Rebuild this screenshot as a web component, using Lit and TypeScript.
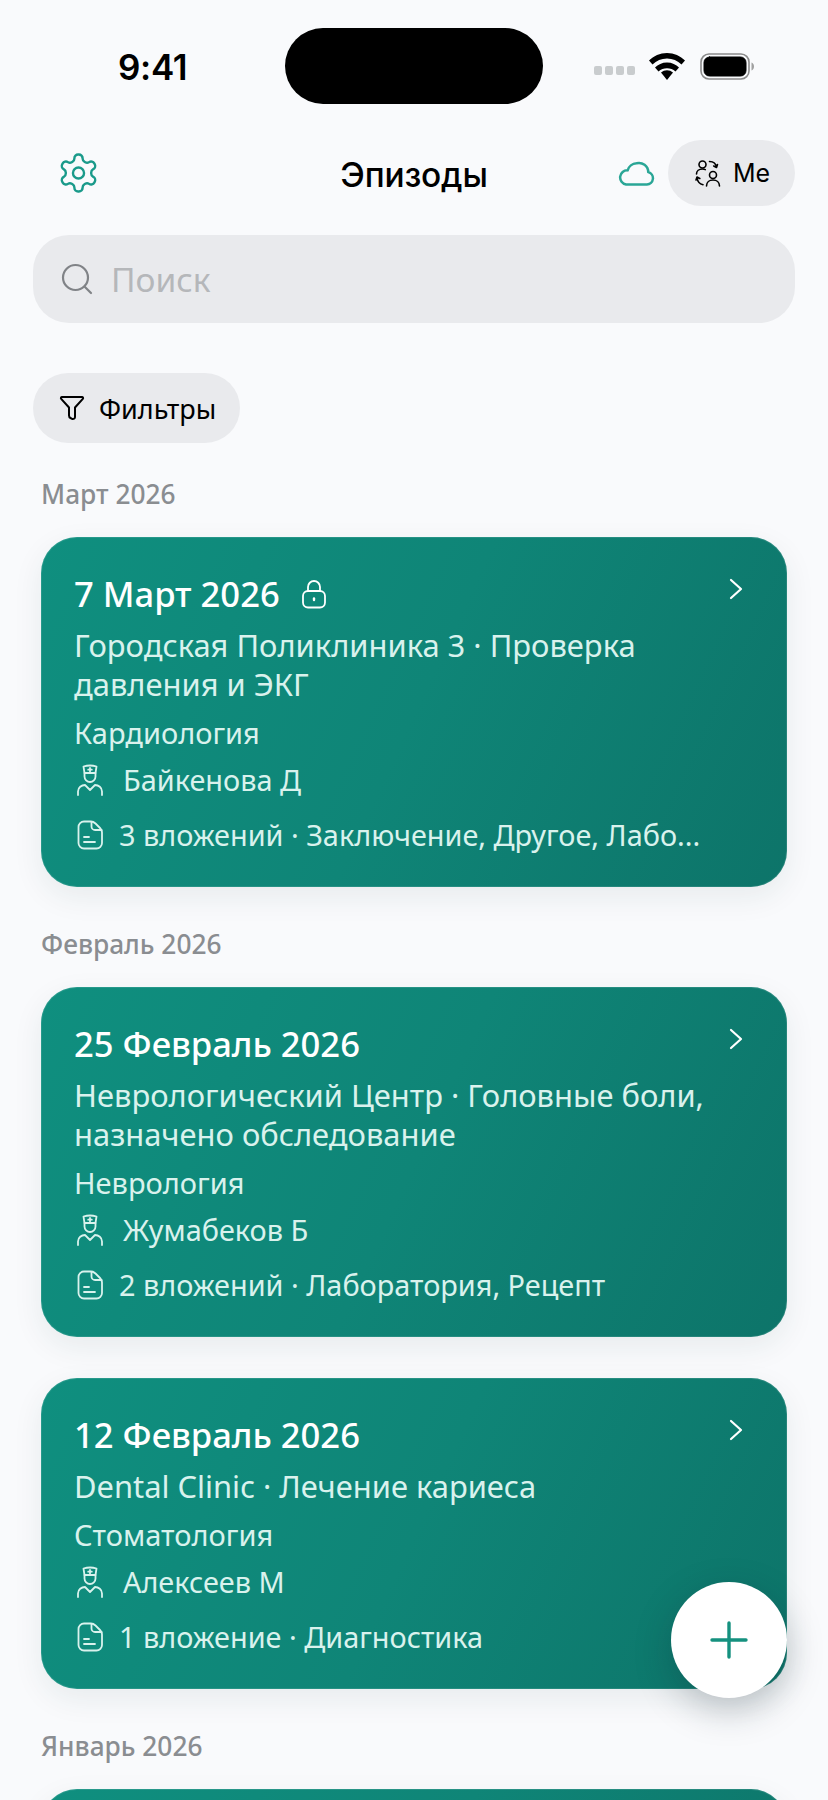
import { LitElement, html, css, svg } from 'lit';
import { customElement } from 'lit/decorators.js';

interface Episode {
  date: string;
  locked?: boolean;
  summary: string;
  specialty: string;
  doctor: string;
  files: string;
}

interface Group {
  month: string;
  episodes: Episode[];
}

const GROUPS: Group[] = [
  {
    month: 'Март 2026',
    episodes: [
      {
        date: '7 Март 2026',
        locked: true,
        summary: 'Городская Поликлиника 3 · Проверка давления и ЭКГ',
        specialty: 'Кардиология',
        doctor: 'Байкенова Д',
        files: '3 вложений · Заключение, Другое, Лабо...',
      },
    ],
  },
  {
    month: 'Февраль 2026',
    episodes: [
      {
        date: '25 Февраль 2026',
        summary: 'Неврологический Центр · Головные боли, назначено обследование',
        specialty: 'Неврология',
        doctor: 'Жумабеков Б',
        files: '2 вложений · Лаборатория, Рецепт',
      },
      {
        date: '12 Февраль 2026',
        summary: 'Dental Clinic · Лечение кариеса',
        specialty: 'Стоматология',
        doctor: 'Алексеев М',
        files: '1 вложение · Диагностика',
      },
    ],
  },
  {
    month: 'Январь 2026',
    episodes: [{ date: '', summary: '', specialty: '', doctor: '', files: '' }],
  },
];

const gearIcon = svg`<path d="M12.22 2h-.44a2 2 0 0 0-2 2v.18a2 2 0 0 1-1 1.73l-.43.25a2 2 0 0 1-2 0l-.15-.08a2 2 0 0 0-2.73.73l-.22.38a2 2 0 0 0 .73 2.73l.15.1a2 2 0 0 1 1 1.72v.51a2 2 0 0 1-1 1.74l-.15.09a2 2 0 0 0-.73 2.73l.22.38a2 2 0 0 0 2.73.73l.15-.08a2 2 0 0 1 2 0l.43.25a2 2 0 0 1 1 1.73V20a2 2 0 0 0 2 2h.44a2 2 0 0 0 2-2v-.18a2 2 0 0 1 1-1.73l.43-.25a2 2 0 0 1 2 0l.15.08a2 2 0 0 0 2.73-.73l.22-.39a2 2 0 0 0-.73-2.73l-.15-.08a2 2 0 0 1-1-1.74v-.5a2 2 0 0 1 1-1.74l.15-.09a2 2 0 0 0 .73-2.73l-.22-.38a2 2 0 0 0-2.73-.73l-.15.08a2 2 0 0 1-2 0l-.43-.25a2 2 0 0 1-1-1.73V4a2 2 0 0 0-2-2z"/><circle cx="12" cy="12" r="3"/>`;

@customElement('app-root')
export class AppRoot extends LitElement {
  static override styles = css`
    :host {
      display: block;
      position: relative;
      width: 828px;
      height: 1800px;
      overflow: hidden;
      background: #f9fafc;
      font-family: 'Noto Sans', sans-serif;
      color: #000;
    }

    svg {
      display: block;
      flex: none;
      fill: none;
      stroke: currentColor;
      stroke-linecap: round;
      stroke-linejoin: round;
    }

    /* status bar */
    .status {
      display: flex;
      align-items: center;
      height: 76px;
      padding: 28px 73px 0 118px;
    }
    .time {
      font-family: Inter, sans-serif;
      font-size: 35px;
      font-weight: 600;
      letter-spacing: -0.3px;
      width: 167px;
      padding-top: 1px;
    }
    .island {
      width: 258px;
      height: 76px;
      border-radius: 38px;
      background: #000;
    }
    .sys {
      display: flex;
      align-items: center;
      margin-left: 51px;
    }
    .dots {
      display: flex;
      gap: 3px;
      margin: 8px 14px 0 0;
    }
    .dots i {
      width: 8px;
      height: 9px;
      border-radius: 2px;
      background: #c9ccce;
    }
    .wifi {
      fill: #000;
      stroke: none;
      margin-right: 15px;
    }

    /* top bar */
    .topbar {
      display: grid;
      grid-template-columns: 1fr auto 1fr;
      align-items: center;
      height: 66px;
      margin-top: 36px;
      padding: 0 33px;
    }
    .gear {
      color: #1a9a8a;
      margin-left: 27px;
    }
    .title {
      font-family: Inter, sans-serif;
      font-size: 33.5px;
      font-weight: 500;
      letter-spacing: -0.2px;
      padding-top: 4px;
    }
    .actions {
      display: flex;
      align-items: center;
      justify-content: flex-end;
    }
    .cloud {
      color: #2aa696;
      margin-right: 12px;
    }
    .me {
      display: flex;
      align-items: center;
      gap: 12px;
      width: 127px;
      height: 66px;
      box-sizing: border-box;
      padding-left: 27px;
      border-radius: 33px;
      background: #e9eaed;
      font-family: Inter, sans-serif;
      font-size: 25px;
    }

    /* search and filters */
    .search {
      display: flex;
      align-items: center;
      gap: 18px;
      height: 88px;
      margin: 29px 33px 0;
      padding-left: 28px;
      border-radius: 36px;
      background: #e9eaed;
      font-size: 33.5px;
      color: #b5b7ba;
    }
    .search svg {
      color: #808387;
    }
    .filters {
      display: flex;
      align-items: center;
      gap: 14px;
      width: fit-content;
      height: 70px;
      margin: 50px 0 0 33px;
      padding: 0 24px 0 26px;
      border-radius: 35px;
      background: #e9eaed;
      font-size: 27px;
    }

    /* list */
    .month {
      margin: 39px 0 0 41px;
      font-size: 26.3px;
      line-height: 36px;
      font-weight: 500;
      color: #8a8d91;
    }
    .filters + .month {
      margin-top: 33px;
    }
    .card {
      position: relative;
      margin: 25px 41px 0;
      padding: 36px 33px 33px;
      border-radius: 36px;
      background: linear-gradient(115deg, #0f8f7f 0%, #0f8577 50%, #0d7469 100%);
      box-shadow:
        inset 0 0 0 1px rgba(255, 255, 255, 0.1),
        0 10px 30px rgba(30, 60, 70, 0.08);
      color: #d9f2ed;
      font-size: 28.85px;
      line-height: 38px;
    }
    .card + .card {
      margin-top: 41px;
    }
    .card.stub {
      height: 200px;
    }
    .date {
      display: flex;
      align-items: center;
      gap: 21px;
      font-size: 34.6px;
      line-height: 42px;
      font-weight: 550;
      color: #fff;
    }
    .chev {
      position: absolute;
      top: 41px;
      right: 44px;
      color: #fff;
    }
    .summary {
      margin-top: 11px;
      font-size: 30.9px;
      line-height: 39px;
    }
    .spec {
      margin-top: 10px;
      font-size: 29px;
    }
    .row {
      display: flex;
      align-items: center;
      margin-top: 9px;
      padding-left: 2px;
      gap: 19px;
    }
    .row.files {
      margin-top: 17px;
      gap: 15px;
      white-space: nowrap;
    }

    .fab {
      position: absolute;
      left: 671px;
      top: 1582px;
      width: 116px;
      height: 116px;
      border-radius: 50%;
      background: #fff;
      color: #15917f;
      display: flex;
      align-items: center;
      justify-content: center;
      box-shadow: 0 12px 36px rgba(20, 40, 50, 0.25);
    }
  `;

  private renderEpisode(ep: Episode) {
    if (!ep.date) {
      return html`<div class="card stub"></div>`;
    }
    return html`
      <div class="card">
        <div class="date">
          ${ep.date}
          ${ep.locked
            ? html`<svg width="26" height="30" viewBox="0 0 26 30" stroke-width="1.8">
                <rect x="2" y="12" width="22" height="16.5" rx="5" />
                <path d="M7 12V8a6 6 0 0 1 12 0v4" />
                <path d="M13 19.5v1.5" stroke-width="2.4" />
              </svg>`
            : ''}
        </div>
        <svg class="chev" width="14" height="22" viewBox="0 0 14 22" stroke-width="2.2">
          <path d="M2 2l10 9-10 9" />
        </svg>
        <div class="summary">${ep.summary}</div>
        <div class="spec">${ep.specialty}</div>
        <div class="row">
          <svg width="28" height="32" viewBox="0 0 28 32" stroke-width="1.8">
            <path d="M7.500 2.500c4-1.200 9-1.200 13 0l-1 6.500h-11z" />
            <path d="M14 4v3.500M12.200 5.700h3.600" />
            <path d="M8.500 9v3.500a5.500 5.500 0 0 0 11 0V9" />
            <path d="M2 31v-3.500c0-4 3.500-6.500 7-6.500l5 5 5-5c3.500 0 7 2.500 7 6.500V31" />
          </svg>
          <span>${ep.doctor}</span>
        </div>
        <div class="row files">
          <svg width="28" height="30" viewBox="0 0 28 30" stroke-width="1.8">
            <path d="M8 1.500h7c2 0 3 .6 4.500 2l4.500 4.500c1.500 1.500 2 2.500 2 4.500V23a5.500 5.500 0 0 1-5.500 5.500H8A5.500 5.500 0 0 1 2.500 23V7A5.500 5.500 0 0 1 8 1.500z" />
            <path d="M15.500 2v4.500a3.500 3.500 0 0 0 3.500 3.500h6.500" />
            <path d="M8 17h5M8 22h11" />
          </svg>
          <span>${ep.files}</span>
        </div>
      </div>
    `;
  }

  override render() {
    return html`
      <div class="status">
        <div class="time">9:41</div>
        <div class="island"></div>
        <div class="sys">
          <div class="dots"><i></i><i></i><i></i><i></i></div>
          <svg class="wifi" width="36" height="27" viewBox="0 0 36 27">
            <path d="M18 27l-6-7.500a9.500 9.500 0 0 1 12 0z" />
            <path d="M18 9.500c5 0 9 2 12 5l-3.500 4a13 13 0 0 0-17 0l-3.500-4c3-3 7-5 12-5z" />
            <path d="M18 0c7 0 13.500 3 18 7.500l-3.500 4A20.500 20.500 0 0 0 18 5.500a20.500 20.500 0 0 0-14.500 6L0 7.500C4.500 3 11 0 18 0z" />
          </svg>
          <svg width="55" height="27" viewBox="0 0 55 27" stroke="none">
            <rect x="1" y="1" width="48" height="25" rx="8" fill="none" stroke="#8a8a8a" stroke-width="1.600" />
            <rect x="4" y="4" width="42" height="19" rx="5.500" fill="#000" />
            <path d="M51.500 9.500c1.500.5 2.500 2 2.500 4s-1 3.500-2.500 4z" fill="#a0a0a0" stroke="none" />
          </svg>
        </div>
      </div>

      <div class="topbar">
        <svg class="gear" width="37" height="42" viewBox="2 1 20 22" stroke-width="1.300">${gearIcon}</svg>
        <div class="title">Эпизоды</div>
        <div class="actions">
          <svg class="cloud" width="39" height="25" viewBox="0 0 36 24" stroke-width="2.400">
            <path d="M8 22.500H28a6 6 0 0 0 1.300-11.800A9 9 0 0 0 18 2.200a9.200 9.200 0 0 0-8.500 6.800A6.800 6.800 0 0 0 8 22.500z" />
          </svg>
          <div class="me">
            <svg width="26" height="28" viewBox="0 0 26 28" stroke-width="1.600">
              <circle cx="7.500" cy="5.500" r="3.500" />
              <path d="M1.500 15c0-3 2.500-5 6-5 1 0 2 .2 2.800.6" />
              <circle cx="18" cy="16" r="3.500" />
              <path d="M11.500 27c0-3.800 3-6 6.500-6s6.500 2.200 6.500 6" />
              <path d="M14.500 2.500c3.500 0 6.500 2 7 6M22.500 5.500l-1 3-2.800-1.500" />
              <path d="M2 18.500c.5 4 2.500 6.500 6 7.200M1 21l1-3 2.800 1.500" />
            </svg>
            Me
          </div>
        </div>
      </div>

      <div class="search">
        <svg width="32" height="32" viewBox="0 0 32 32" stroke-width="2.200">
          <circle cx="14.500" cy="14.500" r="12.500" />
          <path d="M24 24l6 6" />
        </svg>
        Поиск
      </div>

      <div class="filters">
        <svg width="26" height="26" viewBox="0 0 26 26" stroke-width="2">
          <path d="M3 2h20c1 0 1.500 1 .8 1.800L16 12.500v9.500c0 1.500-1.500 2.500-3 1.800l-1.500-.8c-1-.5-1.500-1.200-1.500-2.500v-8L2.200 3.800C1.500 3 2 2 3 2z" />
        </svg>
        Фильтры
      </div>

      ${GROUPS.map(
        (g) => html`
          <div class="month">${g.month}</div>
          ${g.episodes.map((ep) => this.renderEpisode(ep))}
        `,
      )}

      <div class="fab">
        <svg width="38" height="38" viewBox="0 0 38 38" stroke-width="3.400">
          <path d="M19 2v34M2 19h34" />
        </svg>
      </div>
    `;
  }
}

declare global {
  interface HTMLElementTagNameMap {
    'app-root': AppRoot;
  }
}
